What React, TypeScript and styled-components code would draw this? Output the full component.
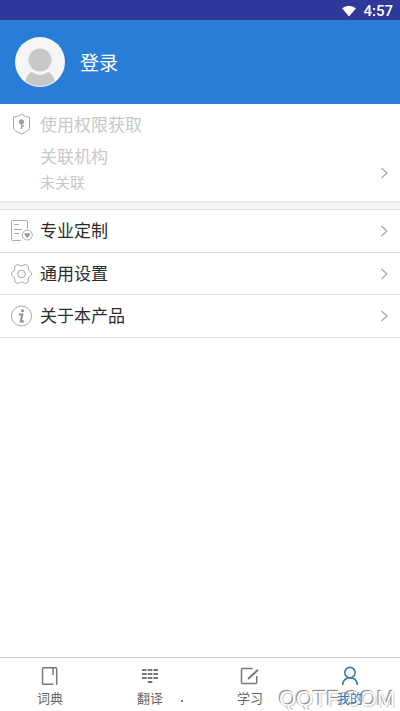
import React from 'react';
import styled, { createGlobalStyle } from 'styled-components';

const GlobalStyle = createGlobalStyle`
  * { box-sizing: border-box; }
  body {
    margin: 0;
    background: #fff;
    font-family: Roboto, 'Noto Sans CJK SC', sans-serif;
  }
  button { font: inherit; color: inherit; background: none; border: 0; padding: 0; text-align: left; cursor: pointer; }
  svg { display: block; flex: none; }
`;

const Screen = styled.div`
  position: relative;
  display: flex;
  flex-direction: column;
  min-height: 100vh;
`;

const StatusBar = styled.div`
  display: flex;
  align-items: center;
  justify-content: flex-end;
  gap: 6px;
  height: 20px;
  padding: 2px 7px 0 0;
  background: #2f389b;
  color: #fff;
  font-size: 15px;
  font-weight: 500;
  line-height: 18px;
`;

const Header = styled.header`
  display: flex;
  align-items: center;
  height: 84px;
  padding: 0 15px;
  background: #287dd7;
`;

const Login = styled.button`
  && {
    display: flex;
    align-items: center;
    gap: 15px;
    color: #fff;
    font-size: 19px;
    line-height: 28px;
    font-weight: 400;
  }
`;

const LoginLabel = styled.span`
  padding-top: 4px;
`;

const Access = styled.section`
  display: flex;
  flex-direction: column;
  height: 97px;
  padding-top: 6px;
  color: #c8c8c8;
`;

const AccessTitle = styled.div`
  display: flex;
  align-items: flex-start;
  height: 28px;
  padding-left: 10px;
  gap: 7px;
  font-size: 17px;
  line-height: 30px;

  svg { margin-top: 3px; }
`;

const Organisation = styled.button`
  && {
    display: flex;
    align-items: flex-end;
    justify-content: space-between;
    padding: 5px 11px 0 40px;
  }

  > svg { margin-bottom: 16px; }
`;

const OrgName = styled.div`
  font-size: 17px;
  line-height: 28px;
`;

const OrgState = styled.div`
  font-size: 15px;
  line-height: 24px;
`;

const Divider = styled.div`
  height: 9px;
  background: #f4f4f4;
  border-top: 2px solid #e9e9e9;
  border-bottom: 1px solid #e2e2e2;
`;

const Menu = styled.nav`
  display: flex;
  flex-direction: column;
`;

const MenuRow = styled.button`
  && {
    display: flex;
    align-items: center;
    gap: 7px;
    min-height: 43px;
    padding: 0 11px 0 10px;
    border-bottom: 1px solid #dedede;
    color: #2c2c2c;
    font-size: 17px;
    line-height: 26px;
  }
  &&:nth-child(2) { min-height: 42px; }
`;

const RowLabel = styled.span`
  flex: 1;
`;

const TabBar = styled.nav`
  position: relative;
  z-index: 1;
  display: grid;
  grid-template-columns: repeat(4, 1fr);
  height: 54px;
  margin-top: auto;
  border-top: 1px solid #cbcbcb;
`;

const Tab = styled.button<{ $active?: boolean }>`
  && {
    display: flex;
    flex-direction: column;
    align-items: center;
    padding-top: 7px;
    gap: 3px;
    color: ${(p) => (p.$active ? '#3a7cb8' : '#666')};
    font-size: 13px;
    line-height: 18px;
  }
`;

const Watermark = styled.div`
  position: absolute;
  right: 5px;
  bottom: 0;
  color: #fff;
  font-family: 'Liberation Sans', sans-serif;
  font-size: 22px;
  line-height: 24px;
  text-shadow: -1px -1px 1px #777, 1px 1px 1px #ccc;
  pointer-events: none;
`;

const Speck = styled.span`
  position: absolute;
  left: 181px;
  bottom: 9px;
  width: 2px;
  height: 2px;
  background: #777;
`;

const Chevron = () => (
  <svg width="9" height="12" viewBox="0 0 9 12" fill="none" stroke="#a2a2a2" strokeWidth="1.1">
    <path d="M1.5 1 L7 6 L1.5 11" />
  </svg>
);

const Wifi = () => (
  <svg width="16" height="12" viewBox="0 0 16 12" fill="#fff">
    <path d="M1 3.2 Q8 -1.8 15 3.2 L8 11.6 Z" />
  </svg>
);

const Avatar = () => (
  <svg width="50" height="50" viewBox="0 0 50 50">
    <defs>
      <clipPath id="avatar"><circle cx="25" cy="25" r="24" /></clipPath>
    </defs>
    <circle cx="25" cy="25" r="25" fill="#f6f6f6" />
    <g clipPath="url(#avatar)" fill="#c8c8c8">
      <circle cx="25" cy="23" r="11.5" />
      <path d="M9 50 Q11 36 17 35 Q25 41 33 35 Q39 36 41 50 Z" />
    </g>
  </svg>
);

const Shield = () => (
  <svg width="23" height="22" viewBox="0 0 23 22" fill="none" stroke="#a6a6a6">
    <path d="M11.5 1.2 Q15 4 19.5 4.2 V15 Q19 18 11.5 20.8 Q4 18 3.5 15 V4.2 Q8 4 11.5 1.2 Z" />
    <circle cx="11.5" cy="8.8" r="2.6" fill="#a0a0a0" stroke="none" />
    <path d="M11.5 10 V16 M11.5 13 H14" strokeWidth="1.3" stroke="#a0a0a0" />
  </svg>
);

const Custom = () => (
  <svg width="23" height="22" viewBox="0 0 23 22" fill="none" stroke="#aaa">
    <path d="M10.5 20.5 H2.5 Q1.5 20.5 1.5 19.5 V1.5 Q1.5 .5 2.5 .5 H16.5 Q17.5 .5 17.5 1.5 V8.5" />
    <path d="M4 4.5 H9 M4 9.5 H12 M4 13.5 H9" />
    <circle cx="17.3" cy="15" r="5" />
    <path d="M17.3 18 L14.6 15.1 Q13.9 13.3 15.6 13 Q16.7 12.9 17.3 13.9 Q17.9 12.9 19 13 Q20.7 13.3 20 15.1 Z" fill="#999" stroke="none" />
  </svg>
);

const Gear = () => (
  <svg width="23" height="22" viewBox="0 0 23 22" fill="none" stroke="#a6a6a6">
    <path d="M7 1.8 Q8 1 9 2.2 Q11.5 4 14 2.2 Q15 1 16 1.8 L18 3 Q18.7 3.7 18.2 5 Q17.8 7.8 20.5 9 Q21.5 9.3 21.5 11 Q21.5 12.7 20.5 13 Q17.8 14.2 18.2 17 Q18.7 18.3 18 19 L16 20.2 Q15 21 14 19.8 Q11.5 18 9 19.8 Q8 21 7 20.2 L5 19 Q4.3 18.3 4.8 17 Q5.2 14.2 2.5 13 Q1.5 12.7 1.5 11 Q1.5 9.3 2.5 9 Q5.2 7.8 4.8 5 Q4.3 3.7 5 3 Z" />
    <circle cx="11.5" cy="11" r="3.8" />
  </svg>
);

const Info = () => (
  <svg width="23" height="22" viewBox="0 0 23 22" fill="none" stroke="#a6a6a6">
    <circle cx="11.5" cy="11" r="10" />
    <circle cx="12.5" cy="5.8" r="1.5" fill="#909090" stroke="none" />
    <path d="M9 9.5 H12.3 L10.8 16.5 H13.9" stroke="#909090" strokeWidth="2" />
  </svg>
);

const Book = () => (
  <svg width="22" height="22" viewBox="0 0 22 22" fill="none" stroke="#777" strokeWidth="1.5">
    <path d="M14.5 19.3 H4.5 Q3.5 19.3 3.5 18.3 V4 Q3.5 2.8 4.7 2.8 H16.5 Q17.7 2.8 17.7 4 V19.8 M14 3 V10" />
  </svg>
);

const Translate = () => (
  <svg width="22" height="22" viewBox="0 0 22 22" fill="none" stroke="#777" strokeWidth="2">
    <path d="M3 5 H19 M3 9 H19 M3 13 H19" strokeDasharray="4.6 1.1" />
    <path d="M8.7 17 H13.3" />
  </svg>
);

const Study = () => (
  <svg width="22" height="22" viewBox="0 0 22 22" fill="none" stroke="#777" strokeWidth="1.5">
    <path d="M13.5 3.5 H3.5 Q2.5 3.5 2.5 4.5 V17.5 Q2.5 18.5 3.5 18.5 H16.5 Q17.7 18.5 17.7 17.5 V11" />
    <path d="M9 14 L19 4.8" strokeWidth="1.9" />
  </svg>
);

const Person = () => (
  <svg width="22" height="22" viewBox="0 0 22 22" fill="none" stroke="#3577b3" strokeWidth="1.6">
    <circle cx="11" cy="7.6" r="5.2" />
    <path d="M3.6 20 Q4.2 13 11 12.8 Q17.8 13 18.4 20" />
  </svg>
);

const menu = [
  { label: '专业定制', Icon: Custom },
  { label: '通用设置', Icon: Gear },
  { label: '关于本产品', Icon: Info },
];

const tabs = [
  { label: '词典', Icon: Book },
  { label: '翻译', Icon: Translate },
  { label: '学习', Icon: Study },
  { label: '我的', Icon: Person, active: true },
];

export default function App() {
  return (
    <Screen lang="zh-CN">
      <GlobalStyle />
      <StatusBar>
        <Wifi />
        <span>4:57</span>
      </StatusBar>
      <Header>
        <Login>
          <Avatar />
          <LoginLabel>登录</LoginLabel>
        </Login>
      </Header>
      <Access>
        <AccessTitle>
          <Shield />
          <span>使用权限获取</span>
        </AccessTitle>
        <Organisation>
          <div>
            <OrgName>关联机构</OrgName>
            <OrgState>未关联</OrgState>
          </div>
          <Chevron />
        </Organisation>
      </Access>
      <Divider />
      <Menu>
        {menu.map(({ label, Icon }) => (
          <MenuRow key={label}>
            <Icon />
            <RowLabel>{label}</RowLabel>
            <Chevron />
          </MenuRow>
        ))}
      </Menu>
      <TabBar>
        {tabs.map(({ label, Icon, active }) => (
          <Tab key={label} $active={active} aria-current={active ? 'page' : undefined}>
            <Icon />
            <span>{label}</span>
          </Tab>
        ))}
      </TabBar>
      <Speck />
      <Watermark>QQTF.COM</Watermark>
    </Screen>
  );
}
